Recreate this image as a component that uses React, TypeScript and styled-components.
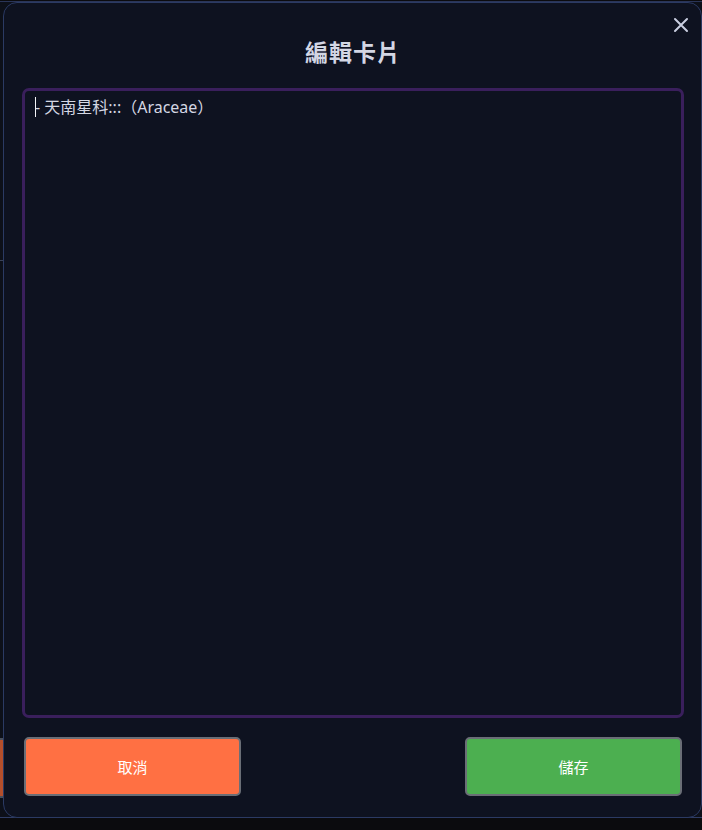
import React from "react";
import styled, { createGlobalStyle } from "styled-components";

const GlobalStyle = createGlobalStyle`
  html, body {
    margin: 0;
    padding: 0;
    background: #0b0b0e;
    overflow: hidden;
  }
  body {
    font-family: "Noto Sans", "Noto Sans CJK TC", sans-serif;
  }
  * { box-sizing: border-box; }
`;

const Page = styled.div`
  width: 702px;
  height: 830px;
  padding-top: 1px;
`;

const BackPanel = styled.div`
  height: 817px;
  border-top: 1px solid #2a3558;
  border-bottom: 1px solid #2f3d66;
  background: #0d1019;
  display: flex;
  flex-direction: column;
  overflow: hidden;
`;

const BackRow = styled.div<{ $h: number; $line?: boolean }>`
  height: ${(p) => p.$h}px;
  flex: none;
  border-bottom: ${(p) => (p.$line ? "1px solid #3a4258" : "none")};
`;

const BackButton = styled.div`
  width: 220px;
  height: 60px;
  margin-left: -200px;
  background: #b44f2c;
  border: 2px solid #4a4f5a;
  border-radius: 4px;
  flex: none;
`;

const Modal = styled.div`
  position: fixed;
  left: 3px;
  top: 2px;
  width: 699px;
  height: 816px;
  background: #0e1220;
  border: 1px solid #2b3a63;
  border-radius: 14px;
  padding: 0 17px 0 18px;
  display: flex;
  flex-direction: column;
`;

const Title = styled.h2`
  margin: 0;
  height: 85px;
  padding-top: 32px;
  text-align: center;
  font-size: 23px;
  line-height: 32px;
  font-weight: 700;
  color: #d3d6e4;
  letter-spacing: 1px;
  font-family: "Noto Sans CJK TC", "Noto Sans", sans-serif;
`;

const CloseButton = styled.button`
  position: absolute;
  top: 11px;
  right: 9px;
  width: 22px;
  height: 22px;
  padding: 0;
  border: none;
  background: transparent;
  color: #c9cee0;
  display: flex;
  align-items: center;
  justify-content: center;
  cursor: pointer;
`;

const EditorWrap = styled.div`
  position: relative;
  width: 662px;
  height: 630px;
`;

const Editor = styled.textarea`
  display: block;
  width: 100%;
  height: 100%;
  margin: 0;
  resize: none;
  background: #0e1220;
  border: 3px solid #3a1f5c;
  border-radius: 7px;
  padding: 5px 10px;
  color: #d4d7e3;
  caret-color: transparent;
  font-size: 16px;
  line-height: 22px;
  font-family: "Noto Sans", "Noto Sans CJK TC", sans-serif;
  text-spacing-trim: space-all;
  outline: none;
`;

const Caret = styled.span`
  position: absolute;
  left: 13px;
  top: 9px;
  width: 1px;
  height: 20px;
  background: #f2f3f7;
  pointer-events: none;
`;

const Actions = styled.div`
  margin-top: 19px;
  padding: 0 2px;
  display: flex;
  justify-content: space-between;
  width: 662px;
`;

const ActionButton = styled.button<{ $variant: "cancel" | "save" }>`
  width: 217px;
  height: 59px;
  border: 2px solid #6a6e76;
  border-radius: 5px;
  background: ${(p) => (p.$variant === "cancel" ? "#ff7043" : "#4caf50")};
  color: #ffffff;
  font-size: 15px;
  font-family: "Noto Sans CJK TC", "Noto Sans", sans-serif;
  cursor: pointer;
`;

export default function App() {
  return (
    <>
      <GlobalStyle />
      <Page>
        <BackPanel>
          <BackRow $h={259} $line />
          <BackRow $h={477} />
          <BackButton />
        </BackPanel>
        <Modal>
          <CloseButton aria-label="關閉">
            <svg width="16" height="16" viewBox="0 0 16 16">
              <path d="M2 2 L14 14 M14 2 L2 14" stroke="currentColor" strokeWidth="2" strokeLinecap="round" />
            </svg>
          </CloseButton>
          <Title>編輯卡片</Title>
          <EditorWrap>
            <Editor defaultValue={"- 天南星科:::（Araceae）"} spellCheck={false} />
            <Caret />
          </EditorWrap>
          <Actions>
            <ActionButton $variant="cancel">取消</ActionButton>
            <ActionButton $variant="save">儲存</ActionButton>
          </Actions>
        </Modal>
      </Page>
    </>
  );
}
